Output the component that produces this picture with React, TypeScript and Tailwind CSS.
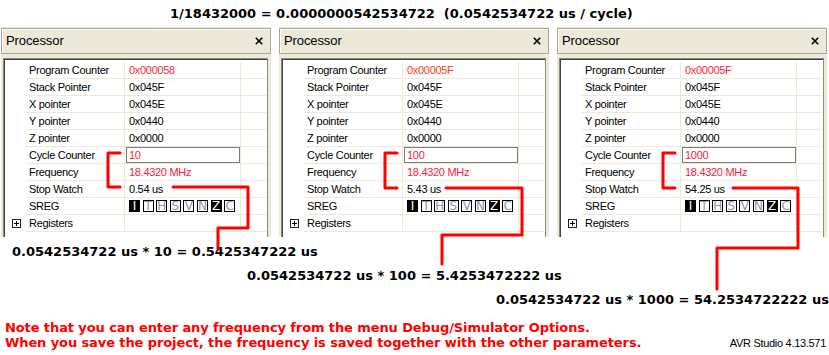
import React from "react";

type PanelProps = { pc: string; pcColor: string; cycle: string; sw: string };

const rowLabels = [
  "Program Counter",
  "Stack Pointer",
  "X pointer",
  "Y pointer",
  "Z pointer",
  "Cycle Counter",
  "Frequency",
  "Stop Watch",
  "SREG",
  "Registers",
];

function Sreg() {
  const flags: [string, boolean][] = [
    ["I", true],
    ["T", false],
    ["H", false],
    ["S", false],
    ["V", false],
    ["N", false],
    ["Z", true],
    ["C", false],
  ];
  return (
    <div className="flex gap-[2.6px] items-center">
      {flags.map(([f, on]) => (
        <div
          key={f}
          className={
            on
              ? "w-[11px] h-[12px] bg-black text-white border border-black flex items-center justify-center text-[12px] font-['DejaVu_Sans',sans-serif] tracking-normal leading-none"
              : "w-[11px] h-[12px] bg-white text-[#9094ae] border border-black flex items-center justify-center text-[12px] font-['DejaVu_Sans',sans-serif] tracking-normal leading-none"
          }
        >
          {f}
        </div>
      ))}
    </div>
  );
}

function Panel({ pc, pcColor, cycle, sw }: PanelProps) {
  const values: React.ReactNode[] = [
    <span style={{ color: pcColor }}>{pc}</span>,
    "0x045F",
    "0x045E",
    "0x0440",
    "0x0000",
    null,
    <span className="text-[#f5203c]">18.4320 MHz</span>,
    sw,
    <Sreg />,
    "",
  ];
  return (
    <div className="w-[270px] h-[210px] bg-[#ece9d8] flex flex-col">
      <div className="h-[26px] mt-[1px] border border-[#aca899] shadow-[inset_1px_1px_0_#fdfcf8] flex items-center justify-between pl-[4px] pr-[7px]">
        <span className="text-[13px] tracking-[-0.1px] text-black">Processor</span>
        <svg width="8" height="8" viewBox="0 0 8 8">
          <path d="M0.8 0.8 L7.2 7.2 M7.2 0.8 L0.8 7.2" stroke="#000" strokeWidth="1.6" />
        </svg>
      </div>
      <div className="flex-1 mt-[4px] ml-[2px] mr-[3px] border-t border-l border-r border-[#8b8a80] shadow-[inset_1px_1px_0_#3f3f3f] bg-white pt-[3px] pl-[2px] pr-[1px] overflow-hidden">
        {rowLabels.map((label, i) => (
          <div key={label} className="flex h-[17px]">
            <div className="w-[20px] flex items-center justify-center">
              {label === "Registers" && (
                <div className="w-[9px] h-[9px] border border-[#222] relative flex items-center justify-center">
                  <div className="absolute w-[5px] h-[1px] bg-black" />
                  <div className="absolute w-[1px] h-[5px] bg-black" />
                </div>
              )}
            </div>
            <div className="w-[99px] border-b border-r border-[#ece9d8] flex items-center pl-[3px] text-black">
              {label}
            </div>
            <div className="w-[116px] border-b border-r border-[#ece9d8] flex items-center pl-[1px] text-black">
              {label === "Cycle Counter" ? (
                <div className="w-[114px] h-[16px] border border-[#7b7b7b] flex items-center pl-[2px] text-[#f5203c]">
                  {cycle}
                </div>
              ) : (
                <span className="pl-[3px]">{values[i]}</span>
              )}
            </div>
            <div className="flex-1 border-b border-[#ece9d8]" />
          </div>
        ))}
      </div>
    </div>
  );
}

export default function App() {
  return (
    <div className="relative w-[829px] h-[355px] bg-white overflow-hidden font-['Liberation_Sans',sans-serif] text-[11px] tracking-[-0.3px]">
      <div className="h-[27px] flex items-center pl-[170px] font-['DejaVu_Sans',sans-serif] font-bold text-[13px] tracking-normal text-black whitespace-pre">
        {"1/18432000 = 0.0000000542534722  (0.0542534722 us / cycle)"}
      </div>
      <div className="flex gap-[8px] pl-[1px]">
        <Panel pc="0x000058" pcColor="#f82838" cycle="10" sw="0.54 us" />
        <Panel pc="0x00005F" pcColor="#ff3a20" cycle="100" sw="5.43 us" />
        <Panel pc="0x00005F" pcColor="#f82838" cycle="1000" sw="54.25 us" />
      </div>
      <div className="font-['DejaVu_Sans',sans-serif] font-bold text-[13px] tracking-normal text-black leading-[24px] mt-[3px] whitespace-pre">
        <div className="pl-[12px]">0.0542534722 us * 10 = 0.5425347222 us</div>
        <div className="pl-[247px]">0.0542534722 us * 100 = 5.4253472222 us</div>
        <div className="pl-[496px]">0.0542534722 us * 1000 = 54.2534722222 us</div>
      </div>
      <div className="flex items-end justify-between mt-[8px] pl-[5px] pr-[3px]">
        <div className="font-['DejaVu_Sans',sans-serif] font-bold text-[13px] tracking-[-0.1px] text-[#ff0000] leading-[15px]">
          <div>Note that you can enter any frequency from the menu Debug/Simulator Options.</div>
          <div>When you save the project, the frequency is saved together with the other parameters.</div>
        </div>
        <div className="text-[11px] text-black leading-[13px]">AVR Studio 4.13.571</div>
      </div>
      <svg
        className="absolute left-0 top-0 pointer-events-none"
        width="829"
        height="355"
        viewBox="0 0 829 355"
      >
        <g fill="none" stroke="#ff0000" strokeWidth="3" strokeLinejoin="round" strokeLinecap="round">
          <path d="M120 153 H108 V187 H120" />
          <path d="M173 187 H248 V228 H218 V249" />
          <path d="M397 153 H385 V188 H397" />
          <path d="M446 188 H522 V235 H442 V264" />
          <path d="M675 153 H663 V188 H675" />
          <path d="M733 188 H798 V248 H717 V289" />
        </g>
      </svg>
    </div>
  );
}
